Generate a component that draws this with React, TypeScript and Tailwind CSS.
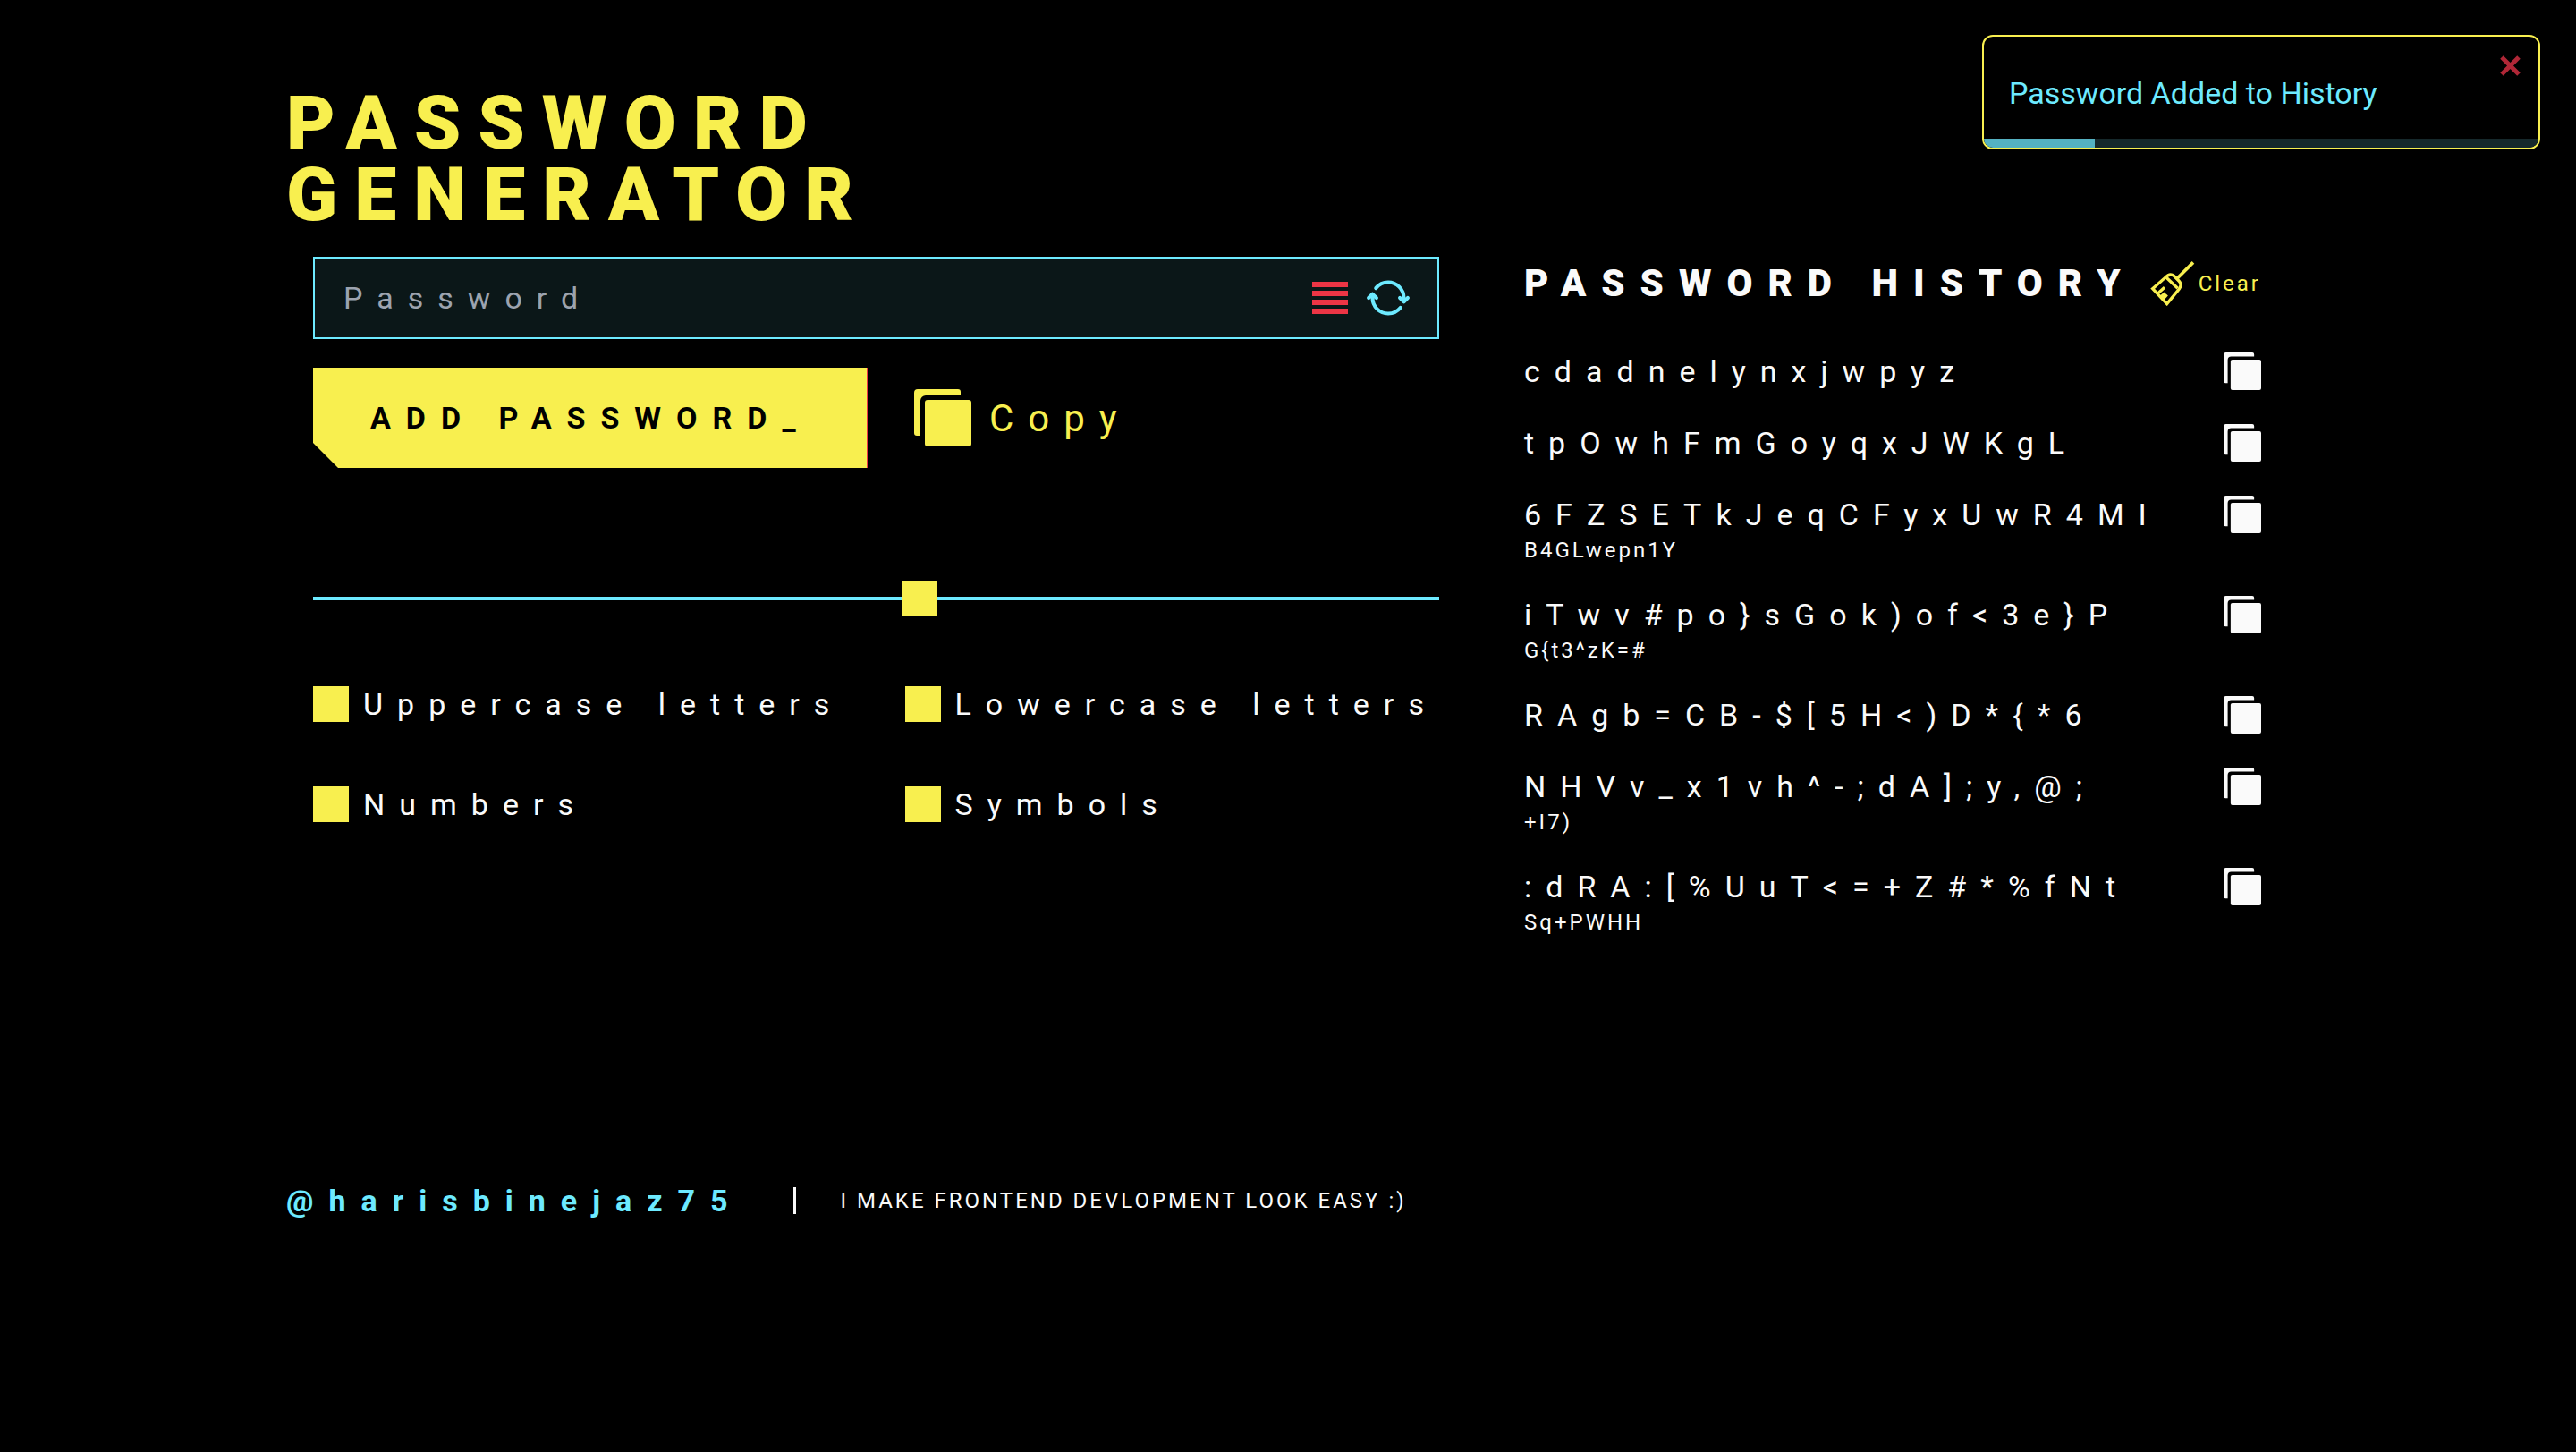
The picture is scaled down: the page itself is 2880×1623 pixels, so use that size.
import { useState } from "react";

type Entry = { head: string; tail?: string };

const entries: Entry[] = [
  { head: "cdadnelynxjwpyz" },
  { head: "tpOwhFmGoyqxJWKgL" },
  { head: "6FZSETkJeqCFyxUwR4MI", tail: "B4GLwepn1Y" },
  { head: "iTwv#po}sGok)of<3e}P", tail: "G{t3^zK=#" },
  { head: "RAgb=CB-$[5H<)D*{*6" },
  { head: "NHVv_x1vh^-;dA];y,@;", tail: "+I7)" },
  { head: ":dRA:[%UuT<=+Z#*%fNt", tail: "Sq+PWHH" },
];

const options = ["Uppercase letters", "Lowercase letters", "Numbers", "Symbols"];

function CopyIcon({ className }: { className: string }) {
  return (
    <svg viewBox="0 0 64 64" fill="currentColor" className={className} aria-hidden="true">
      <path d="M4 0h45a3 3 0 0 1 3 3v4H13a6 6 0 0 0-6 6v39H3a3 3 0 0 1-3-3V4a4 4 0 0 1 4-4z" />
      <rect x="12" y="12" width="52" height="52" rx="3" />
    </svg>
  );
}

function SyncIcon() {
  return (
    <svg viewBox="0 0 512 512" className="size-[50px]" fill="none" stroke="currentColor" strokeWidth="42" strokeLinecap="round" strokeLinejoin="round" aria-hidden="true">
      <path d="M434.67 285.59v-29.8c0-98.73-80.24-178.79-179.2-178.79a179 179 0 0 0-140.14 67.36m-38.53 82v29.8C76.8 355 157 435 256 435a180.45 180.45 0 0 0 140-66.92" />
      <path fill="currentColor" d="M32 256l44-44 46 44M480 256l-44 44-46-44" />
    </svg>
  );
}

function LinesIcon() {
  return (
    <svg viewBox="0 0 40 36" className="h-9 w-10" fill="currentColor" aria-hidden="true">
      <path d="M0 0h40v6H0zM0 10h40v6H0zM0 20h40v6H0zM0 30h40v6H0z" />
    </svg>
  );
}

function BroomIcon() {
  return (
    <svg viewBox="0 0 150 150" className="size-[50px] shrink-0" fill="none" stroke="currentColor" strokeWidth="10" aria-hidden="true">
      <path d="M144 4 91 57" strokeWidth="11" />
      <path d="M8 92 49 56Q66 38 79 49L96 66Q108 78 97 93L56 143Z" />
      <path d="M54 55 92 91" />
      <path d="M26 107 48 88M36 119 50 107M43 126 56 112" />
    </svg>
  );
}

export default function App() {
  const [length, setLength] = useState(54);
  const [checked, setChecked] = useState([true, true, true, true]);

  return (
    <div className="min-h-screen bg-black px-[320px] pt-[98px] font-['Roboto',sans-serif] text-[#fafafa]">
      <div
        role="status"
        className="absolute right-10 top-[39px] h-32 w-[624px] overflow-hidden rounded-xl border-2 border-[#f8ef4f] bg-black"
      >
        <p className="pl-7 pt-[42px] text-[34px] leading-[42px] text-[#6deaff]">Password Added to History</p>
        <button type="button" aria-label="Close" className="absolute right-5 top-5 text-[#b02737]">
          <svg viewBox="0 0 24 24" className="size-6" fill="none" stroke="currentColor" strokeWidth="5" aria-hidden="true">
            <path d="M3 3 22 22M22 3 3 22" />
          </svg>
        </button>
        <div className="absolute inset-x-0 bottom-0 h-[10px] bg-[#16292c]">
          <div className="h-full w-1/5 bg-[#54b1c1]" />
        </div>
      </div>

      <h1 className="text-[84px] font-black uppercase leading-[80px] tracking-[19px] text-[#f8ef4f]">
        Password
        <br />
        Generator
      </h1>

      <main className="mt-[29px] grid grid-cols-[1259fr_824fr] gap-[95px] pl-[30px] pr-8">
        <form onSubmit={(e) => e.preventDefault()}>
          <div className="flex h-[92px] items-center border-2 border-[#6deaff] bg-[#0b1718] pl-8 pr-[30px]">
            <input
              type="text"
              aria-label="Password"
              placeholder="Password"
              className="min-w-0 flex-1 bg-transparent text-[34px] leading-[48px] tracking-[16px] text-white outline-none placeholder:text-[#9ca3af]"
            />
            <button type="button" aria-label="Password strength" className="text-[#ed3545]">
              <LinesIcon />
            </button>
            <button type="button" aria-label="Generate a new password" className="ml-5 text-[#6deaff]">
              <SyncIcon />
            </button>
          </div>

          <div className="mt-8 flex items-center">
            <button
              type="submit"
              className="h-28 w-[620px] border-r border-[#ed3545] bg-[#f8ef4f] pl-16 text-left text-[34px] font-bold tracking-[17px] text-black [clip-path:polygon(0_0,100%_0,100%_100%,28px_100%,0_84px)]"
            >
              ADD PASSWORD_
            </button>
            <button type="button" className="ml-[52px] flex items-center gap-5 text-[42px] tracking-[16px] text-[#f8ef4f]">
              <CopyIcon className="size-16" />
              Copy
            </button>
          </div>

          <input
            type="range"
            aria-label="Password length"
            min={0}
            max={100}
            value={length}
            onChange={(e) => setLength(Number(e.target.value))}
            className="mt-[126px] block h-10 w-full appearance-none bg-transparent [&::-webkit-slider-runnable-track]:h-1 [&::-webkit-slider-runnable-track]:bg-[#6deaff] [&::-webkit-slider-thumb]:-mt-[18px] [&::-webkit-slider-thumb]:size-10 [&::-webkit-slider-thumb]:appearance-none [&::-webkit-slider-thumb]:bg-[#f8ef4f]"
          />

          <div className="mt-[78px] grid grid-cols-2 gap-x-16 gap-y-[72px]">
            {options.map((label, i) => (
              <label key={label} className="flex items-center gap-4 whitespace-nowrap text-[34px] leading-10 tracking-[16px]">
                <input
                  type="checkbox"
                  checked={checked[i]}
                  onChange={() => setChecked(checked.map((c, j) => (j === i ? !c : c)))}
                  className="size-10 shrink-0 appearance-none border-2 border-[#f8ef4f] checked:bg-[#f8ef4f]"
                />
                {label}
              </label>
            ))}
          </div>
        </form>

        <section>
          <div className="flex items-center justify-between">
            <h2 className="whitespace-nowrap text-[42px] font-black leading-[60px] tracking-[17px]">PASSWORD HISTORY</h2>
            <button type="button" className="flex items-center gap-1 text-2xl tracking-[3px] text-[#f8ef4f]">
              <BroomIcon />
              Clear
            </button>
          </div>
          <ul className="mt-11 flex flex-col gap-8">
            {entries.map((entry) => (
              <li key={entry.head} className="flex items-start justify-between">
                <div>
                  <p className="text-[34px] leading-[48px] tracking-[16px]">{entry.head}</p>
                  {entry.tail && <p className="text-2xl leading-8 tracking-[3px]">{entry.tail}</p>}
                </div>
                <button type="button" aria-label="Copy password" className="mt-[3px]">
                  <CopyIcon className="size-[42px]" />
                </button>
              </li>
            ))}
          </ul>
        </section>
      </main>

      <footer className="mt-[271px] flex items-center leading-[48px]">
        <a href="#harisbinejaz75" className="text-[34px] font-bold tracking-[17px] text-[#6deaff]">
          @harisbinejaz75
        </a>
        <span className="ml-14 h-[30px] w-[3px] bg-[#fafafa]" />
        <p className="ml-[50px] text-2xl leading-[48px] tracking-[3px]">I MAKE FRONTEND DEVLOPMENT LOOK EASY :)</p>
      </footer>
    </div>
  );
}
